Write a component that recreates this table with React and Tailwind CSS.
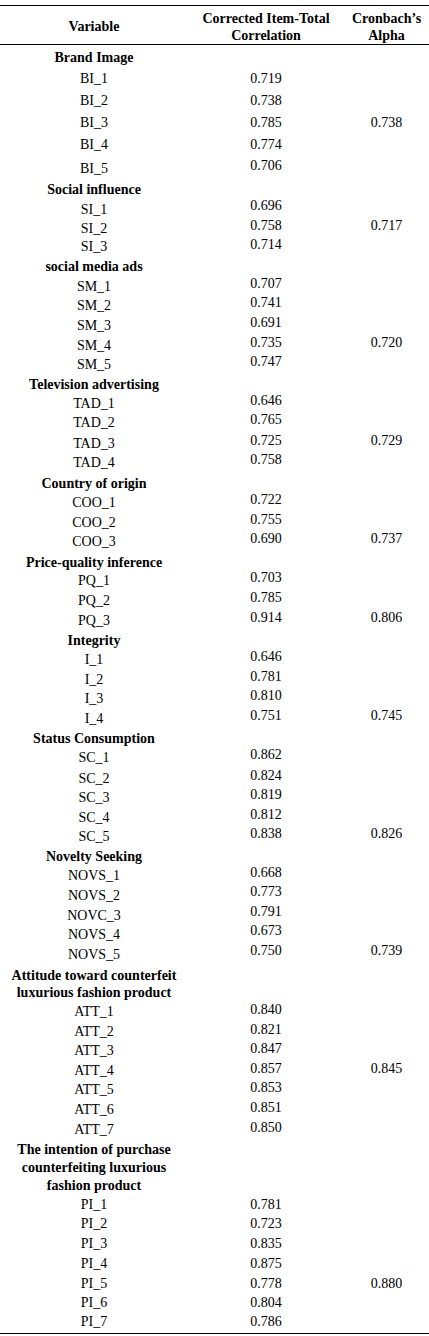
import React from "react";

const H = (lines, h, lead = "leading-[16px]") => ({ type: "h", lines, h, lead });
const R = (label, val, h, off = "", alpha = null) => ({ type: "r", label, val, h, off, alpha });

const rows = [
  H(["Brand Image"], "h-[21px]"),
  R("BI_1", "0.719", "h-[22px]"),
  R("BI_2", "0.738", "h-[22px]"),
  R("BI_3", "0.785", "h-[22px]", "", "0.738"),
  R("BI_4", "0.774", "h-[21px]"),
  R("BI_5", "0.706", "h-[24px]", "pt-[3px]"),
  H(["Social influence"], "h-[16px]"),
  R("SI_1", "0.696", "h-[20px]", "pt-[4px]"),
  R("SI_2", "0.758", "h-[19px]", "pt-[3px]", "0.717"),
  R("SI_3", "0.714", "h-[22px]", "pt-[2px]"),
  H(["social media ads"], "h-[17px]"),
  R("SM_1", "0.707", "h-[19px]", "pt-[3px]"),
  R("SM_2", "0.741", "h-[20px]", "pt-[3px]"),
  R("SM_3", "0.691", "h-[20px]", "pt-[3px]"),
  R("SM_4", "0.735", "h-[19px]", "pt-[3px]", "0.720"),
  R("SM_5", "0.747", "h-[23px]", "pt-[3px]"),
  H(["Television advertising"], "h-[16px]"),
  R("TAD_1", "0.646", "h-[19px]", "pt-[3px]"),
  R("TAD_2", "0.765", "h-[21px]", "pt-[3px]"),
  R("TAD_3", "0.725", "h-[19px]", "pt-[3px]", "0.729"),
  R("TAD_4", "0.758", "h-[24px]", "pt-[3px]"),
  H(["Country of origin"], "h-[16px]"),
  R("COO_1", "0.722", "h-[20px]", "pt-[3px]"),
  R("COO_2", "0.755", "h-[19px]", "pt-[3px]"),
  R("COO_3", "0.690", "h-[24px]", "pt-[3px]", "0.737"),
  H(["Price-quality inference"], "h-[15px]"),
  R("PQ_1", "0.703", "h-[20px]", "pt-[3px]"),
  R("PQ_2", "0.785", "h-[20px]", "pt-[3px]"),
  R("PQ_3", "0.914", "h-[23px]", "pt-[3px]", "0.806"),
  H(["Integrity"], "h-[16px]"),
  R("I_1", "0.646", "h-[20px]", "pt-[3px]"),
  R("I_2", "0.781", "h-[19px]", "pt-[3px]"),
  R("I_3", "0.810", "h-[20px]", "pt-[3px]"),
  R("I_4", "0.751", "h-[23px]", "pt-[3px]", "0.745"),
  H(["Status Consumption"], "h-[16px]"),
  R("SC_1", "0.862", "h-[21px]", "pt-[3px]"),
  R("SC_2", "0.824", "h-[19px]", "pt-[3px]"),
  R("SC_3", "0.819", "h-[20px]", "pt-[3px]"),
  R("SC_4", "0.812", "h-[19px]", "pt-[3px]"),
  R("SC_5", "0.838", "h-[23px]", "pt-[3px]", "0.826"),
  H(["Novelty Seeking"], "h-[16px]"),
  R("NOVS_1", "0.668", "h-[19px]", "pt-[3px]"),
  R("NOVS_2", "0.773", "h-[20px]", "pt-[4px]"),
  R("NOVC_3", "0.791", "h-[19px]", "pt-[4px]"),
  R("NOVS_4", "0.673", "h-[20px]", "pt-[4px]"),
  R("NOVS_5", "0.750", "h-[24px]", "pt-[4px]", "0.739"),
  H(["Attitude toward counterfeit", "luxurious fashion product"], "h-[35px]", "leading-[17px]"),
  R("ATT_1", "0.840", "h-[20px]", "pt-[2px]"),
  R("ATT_2", "0.821", "h-[19px]", "pt-[2px]"),
  R("ATT_3", "0.847", "h-[20px]", "pt-[2px]"),
  R("ATT_4", "0.857", "h-[19px]", "pt-[2px]", "0.845"),
  R("ATT_5", "0.853", "h-[20px]", "pt-[2px]"),
  R("ATT_6", "0.851", "h-[20px]", "pt-[2px]"),
  R("ATT_7", "0.850", "h-[21px]", "pt-[2px]"),
  H(["The intention of purchase", "counterfeiting luxurious", "fashion product"], "h-[56px]", "leading-[18px]"),
  R("PI_1", "0.781", "h-[19px]"),
  R("PI_2", "0.723", "h-[20px]"),
  R("PI_3", "0.835", "h-[20px]"),
  R("PI_4", "0.875", "h-[20px]"),
  R("PI_5", "0.778", "h-[19px]", "", "0.880"),
  R("PI_6", "0.804", "h-[19px]"),
  R("PI_7", "0.786", "h-[19px]"),
];

const cols = "grid grid-cols-[188px_156px_85px]";

export default function App() {
  return (
    <div className="w-[429px] min-h-[1336px] bg-white pt-[5px] text-black text-[14px] font-['Liberation_Serif','Times_New_Roman',serif]">
      <div className="grid grid-cols-[188px_156px_85px] h-[40px] border-t border-b border-black pt-[3px] items-center font-bold leading-[17px] text-center">
        <div>Variable</div>
        <div>
          Corrected Item-Total
          <br />
          Correlation
        </div>
        <div>
          Cronbach’s
          <br />
          Alpha
        </div>
      </div>
      <div className="flex flex-col pt-[5px] border-b border-black">
        {rows.map((r, i) =>
          r.type === "h" ? (
            <div key={i} className={cols + " " + r.h}>
              <div className={"text-center font-bold " + r.lead}>
                {r.lines.map((l, j) => (
                  <div key={j}>{l}</div>
                ))}
              </div>
              <div />
              <div />
            </div>
          ) : (
            <div key={i} className={cols + " leading-[16px] " + r.h}>
              <div className={"text-center " + r.off}>{r.label}</div>
              <div className="text-center">{r.val}</div>
              <div className="text-center">{r.alpha}</div>
            </div>
          )
        )}
      </div>
    </div>
  );
}
